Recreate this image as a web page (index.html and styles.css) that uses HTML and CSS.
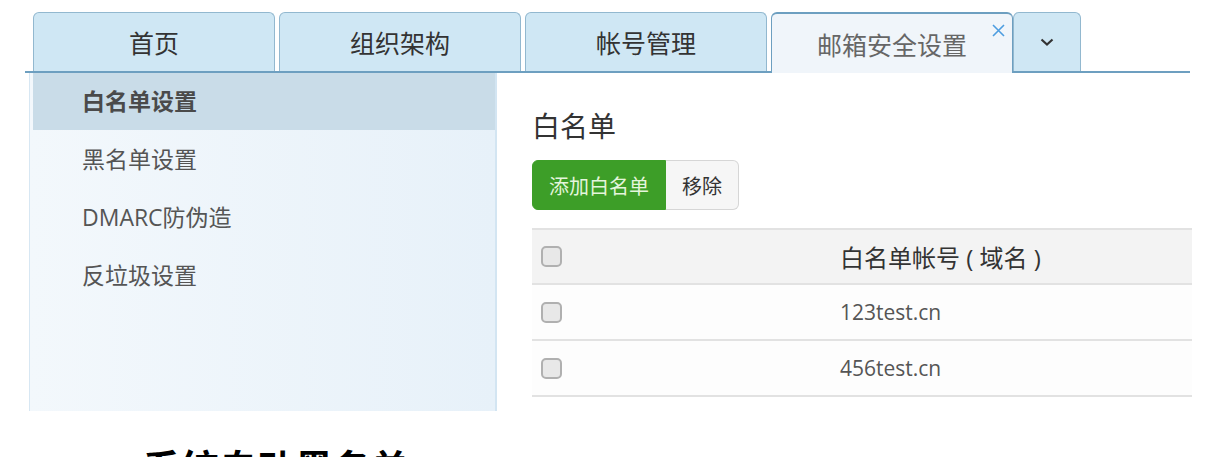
FILE: index.html
```html
<!DOCTYPE html>
<html lang="zh-CN">
<head>
    <meta charset="UTF-8">
    <title>邮箱安全设置</title>
    <link rel="stylesheet" href="styles.css">
</head>
<body>
    <div class="tabs">
        <div class="tab">首页</div>
        <div class="tab">组织架构</div>
        <div class="tab">帐号管理</div>
        <div class="tab tab-active">
            邮箱安全设置
            <svg class="tab-close" width="13" height="13" viewBox="0 0 13 13">
                <path d="M1 1 L12 12 M12 1 L1 12" stroke="#4d9de0" stroke-width="1.6" fill="none"/>
            </svg>
        </div>
        <div class="tab tab-more">
            <svg width="14" height="8" viewBox="0 0 14 8">
                <path d="M1.5 1.5 L7 6.5 L12.5 1.5" stroke="#333" stroke-width="2.2" fill="none"/>
            </svg>
        </div>
    </div>

    <div class="main">
        <ul class="side-menu">
            <li class="active">白名单设置</li>
            <li>黑名单设置</li>
            <li>DMARC防伪造</li>
            <li>反垃圾设置</li>
        </ul>

        <div class="content">
            <h2>白名单</h2>
            <div class="btn-group">
                <button class="btn-add">添加白名单</button>
                <button class="btn-remove">移除</button>
            </div>
            <div class="table">
                <div class="row head">
                    <div class="cell-check"><span class="checkbox"></span></div>
                    <div class="cell-name">白名单帐号 ( 域名 )</div>
                </div>
                <div class="row">
                    <div class="cell-check"><span class="checkbox"></span></div>
                    <div class="cell-name">123test.cn</div>
                </div>
                <div class="row">
                    <div class="cell-check"><span class="checkbox"></span></div>
                    <div class="cell-name">456test.cn</div>
                </div>
            </div>
        </div>
    </div>

    <h3 class="caption">系统自动黑名单</h3>
</body>
</html>
```

FILE: styles.css
```css
* {
    box-sizing: border-box;
}

body {
    margin: 0;
    font-family: "Open Sans", "Noto Sans CJK SC", sans-serif;
    color: #333;
    background: #fff;
}

/* tab bar */
.tabs {
    display: flex;
    gap: 4px;
    width: 1165px;
    margin: 12px 0 0 25px;
    padding-left: 8px;
    border-bottom: 2px solid #6d9fc0;
}

.tab {
    position: relative;
    width: 242px;
    height: 59px;
    display: flex;
    align-items: center;
    justify-content: center;
    font-size: 25px;
    color: #333;
    background: #cfe7f4;
    border: 1px solid #92b8cf;
    border-bottom: none;
    border-radius: 6px 6px 0 0;
}

.tab-active {
    height: 61px;
    margin-bottom: -2px;
    color: #666;
    background: #f0f5fa;
    border: 1px solid #6d9fc0;
    border-top: 2px solid #6d9fc0;
    border-bottom: none;
}

.tab-close {
    position: absolute;
    top: 10px;
    right: 7px;
}

.tab-more {
    width: 68px;
    margin-left: -4px;
}

/* body */
.main {
    display: flex;
    margin-left: 29px;
}

.side-menu {
    width: 468px;
    height: 338px;
    margin: 0;
    padding: 0 0 0 3px;
    list-style: none;
    background: linear-gradient(to right, #f3f8fc, #e7f1f9);
    border-left: 1px solid #d7e7f3;
    border-right: 2px solid #d3e5f2;
}

.side-menu li {
    height: 58px;
    line-height: 58px;
    padding-left: 49px;
    font-size: 23px;
    color: #555;
}

.side-menu li.active {
    height: 57px;
    line-height: 57px;
    background: #c9dce8;
    font-weight: bold;
    color: #4a4a4a;
}

.content {
    flex: 1;
    padding-left: 35px;
}

.content h2 {
    margin: 36px 0 0;
    font-size: 28px;
    font-weight: normal;
    line-height: 34px;
    color: #333;
}

.btn-group {
    display: flex;
    margin-top: 17px;
}

.btn-group button {
    height: 50px;
    padding: 0;
    font-family: inherit;
    font-size: 20px;
    white-space: nowrap;
}

.btn-add {
    width: 134px;
    color: #e4f5dc;
    background: #3d9e28;
    border: 1px solid #3d9e28;
    border-radius: 6px 0 0 6px;
}

.btn-remove {
    width: 73px;
    color: #333;
    background: #f6f6f6;
    border: 1px solid #d6d6d6;
    border-left: none;
    border-radius: 0 6px 6px 0;
}

.table {
    width: 660px;
    margin-top: 18px;
    border-top: 2px solid #e2e2e2;
}

.row {
    display: flex;
    align-items: center;
    height: 56px;
    background: #fdfdfd;
    border-bottom: 2px solid #e2e2e2;
    font-size: 21px;
    color: #555;
}

.row.head {
    height: 55px;
    background: #f3f3f3;
    font-size: 24px;
    color: #333;
}

.cell-check {
    width: 308px;
    padding-left: 9px;
    display: flex;
    align-items: center;
}

.checkbox {
    width: 21px;
    height: 21px;
    background: #e8e8e8;
    border: 2px solid #b0b0b0;
    border-radius: 5px;
}

.caption {
    margin: 32px 0 0 143px;
    font-family: "Noto Sans CJK SC", sans-serif;
    font-size: 38px;
    font-weight: bold;
    color: #000;
    line-height: 1.2;
}
```
